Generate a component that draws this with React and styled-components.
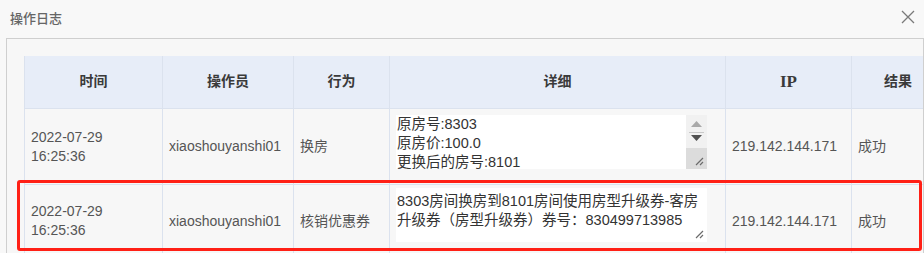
import React from "react";
import styled, { createGlobalStyle } from "styled-components";

const GlobalStyle = createGlobalStyle`
  html, body {
    margin: 0;
    padding: 0;
    background: #f8f8f8;
  }
  body {
    font-family: "Liberation Sans", "Noto Sans CJK SC", sans-serif;
  }
`;

const Dialog = styled.div`
  width: 924px;
  height: 253px;
  overflow: hidden;
  background: #f8f8f8;
`;

const TitleBar = styled.div`
  height: 38px;
  display: flex;
  align-items: center;
  justify-content: space-between;
  padding: 0 9px 4px 10px;
  box-sizing: border-box;
`;

const Title = styled.span`
  font-family: "Noto Sans CJK SC", sans-serif;
  font-size: 13px;
  font-weight: 500;
  color: #666;
`;

const CloseButton = styled.button`
  border: 0;
  background: none;
  padding: 0;
  width: 14px;
  height: 14px;
  display: flex;
  cursor: pointer;
`;

const Body = styled.div`
  margin-left: 6px;
  border: 1px solid #cfcfcf;
  background: #f7f7f7;
  padding: 17px 0 0 17px;
  height: 240px;
  overflow: hidden;
`;

const TableWrap = styled.div`
  position: relative;
  width: 920px;
`;

const Table = styled.table`
  border-collapse: collapse;
  table-layout: fixed;
  width: 920px;
`;

const Th = styled.th`
  height: 52px;
  padding: 0;
  background: #e7edf8;
  border: 1px solid #dbe2ee;
  border-top: 0;
  font-family: "Liberation Serif", "Noto Sans CJK SC", serif;
  font-size: ${(p) => (p.$latin ? 17 : 14)}px;
  line-height: 20px;
  font-weight: bold;
  color: #3a3a3a;
  text-align: center;
  vertical-align: middle;
`;

const Td = styled.td`
  height: 69px;
  padding: 0 6px;
  border: 1px solid #dbe2ee;
  background: #f7f7f7;
  font-family: "Liberation Sans", "Noto Sans CJK SC", sans-serif;
  font-size: 14px;
  line-height: 19px;
  color: #555;
  vertical-align: middle;
  white-space: nowrap;
`;

const DetailTd = styled(Td)`
  vertical-align: top;
  white-space: normal;
  padding: ${(p) => p.$top}px 18px 0 6px;
`;

const DetailBox = styled.div`
  display: flex;
  height: 54px;
  background: #fff;
`;

const DetailText = styled.div`
  flex: 1;
  position: relative;
  padding: ${(p) => p.$pad}px 1px 0 1px;
  font-family: "Liberation Sans", "Noto Sans CJK SC", sans-serif;
  font-size: 14.5px;
  line-height: 19px;
  color: #333;
  overflow: hidden;
  white-space: nowrap;
`;

const Grip = styled.svg`
  position: absolute;
  right: 3px;
  bottom: 3px;
`;

const ScrollTrack = styled.div`
  width: 21px;
  display: flex;
  flex-direction: column;
  background: #f1f1f1;
`;

const Arrow = styled.div`
  height: ${(p) => p.$h}px;
  display: flex;
  align-items: center;
  justify-content: center;
  border-bottom: ${(p) => (p.$line ? "1px solid #c8c8c8" : "0")};
  margin: 0 3px;
`;

const Thumb = styled.div`
  flex: 1;
  margin-top: 5px;
  background: #dcdcdc;
  position: relative;
`;

const Highlight = styled.div`
  position: absolute;
  left: -7px;
  top: 124px;
  width: 905px;
  height: 71px;
  border: 3px solid #ff2016;
  border-radius: 3px;
  box-sizing: border-box;
  pointer-events: none;
`;

const columns = [
  { title: "时间", width: 138 },
  { title: "操作员", width: 131 },
  { title: "行为", width: 96 },
  { title: "详细", width: 336 },
  { title: "IP", width: 126, latin: true },
  { title: "结果", width: 93 },
];

const rows = [
  {
    time: ["2022-07-29", "16:25:36"],
    operator: "xiaoshouyanshi01",
    action: "换房",
    detail: ["原房号:8303", "原房价:100.0", "更换后的房号:8101"],
    scroll: true,
    top: 6,
    pad: 0,
    ip: "219.142.144.171",
    result: "成功",
  },
  {
    time: ["2022-07-29", "16:25:36"],
    operator: "xiaoshouyanshi01",
    action: "核销优惠券",
    detail: [
      "8303房间换房到8101房间使用房型升级券-客房",
      "升级券（房型升级券）券号：830499713985",
    ],
    scroll: false,
    top: 3,
    pad: 4,
    ip: "219.142.144.171",
    result: "成功",
  },
];

const ResizeGrip = () => (
  <Grip width="10" height="10" viewBox="0 0 10 10">
    <path d="M9 2 L2 9 M9 6 L6 9" stroke="#6b6b6b" strokeWidth="1.2" />
  </Grip>
);

const Scrollbar = () => (
  <ScrollTrack>
    <Arrow $h={17} $line>
      <svg width="11" height="6" viewBox="0 0 11 6">
        <path d="M0 6 L5.5 0 L11 6 Z" fill="#a9a9a9" />
      </svg>
    </Arrow>
    <Arrow $h={10}>
      <svg width="11" height="6" viewBox="0 0 11 6">
        <path d="M0 0 L11 0 L5.5 6 Z" fill="#505050" />
      </svg>
    </Arrow>
    <Thumb>
      <ResizeGrip />
    </Thumb>
  </ScrollTrack>
);

export default function App() {
  return (
    <Dialog>
      <GlobalStyle />
      <TitleBar>
        <Title>操作日志</Title>
        <CloseButton aria-label="关闭">
          <svg width="14" height="14" viewBox="0 0 14 14">
            <path d="M1 1 L13 13 M13 1 L1 13" stroke="#7a7a7a" strokeWidth="1.3" />
          </svg>
        </CloseButton>
      </TitleBar>
      <Body>
        <TableWrap>
          <Table>
            <colgroup>
              {columns.map((c) => (
                <col key={c.title} style={{ width: c.width }} />
              ))}
            </colgroup>
            <thead>
              <tr>
                {columns.map((c) => (
                  <Th key={c.title} $latin={c.latin}>
                    {c.title}
                  </Th>
                ))}
              </tr>
            </thead>
            <tbody>
              {rows.map((r, i) => (
                <tr key={i}>
                  <Td>
                    {r.time[0]}
                    <br />
                    {r.time[1]}
                  </Td>
                  <Td>{r.operator}</Td>
                  <Td>{r.action}</Td>
                  <DetailTd $top={r.top}>
                    <DetailBox>
                      <DetailText $pad={r.pad}>
                        {r.detail.map((line) => (
                          <div key={line}>{line}</div>
                        ))}
                        {!r.scroll && <ResizeGrip />}
                      </DetailText>
                      {r.scroll && <Scrollbar />}
                    </DetailBox>
                  </DetailTd>
                  <Td>{r.ip}</Td>
                  <Td>{r.result}</Td>
                </tr>
              ))}
            </tbody>
          </Table>
          <Highlight />
        </TableWrap>
      </Body>
    </Dialog>
  );
}
